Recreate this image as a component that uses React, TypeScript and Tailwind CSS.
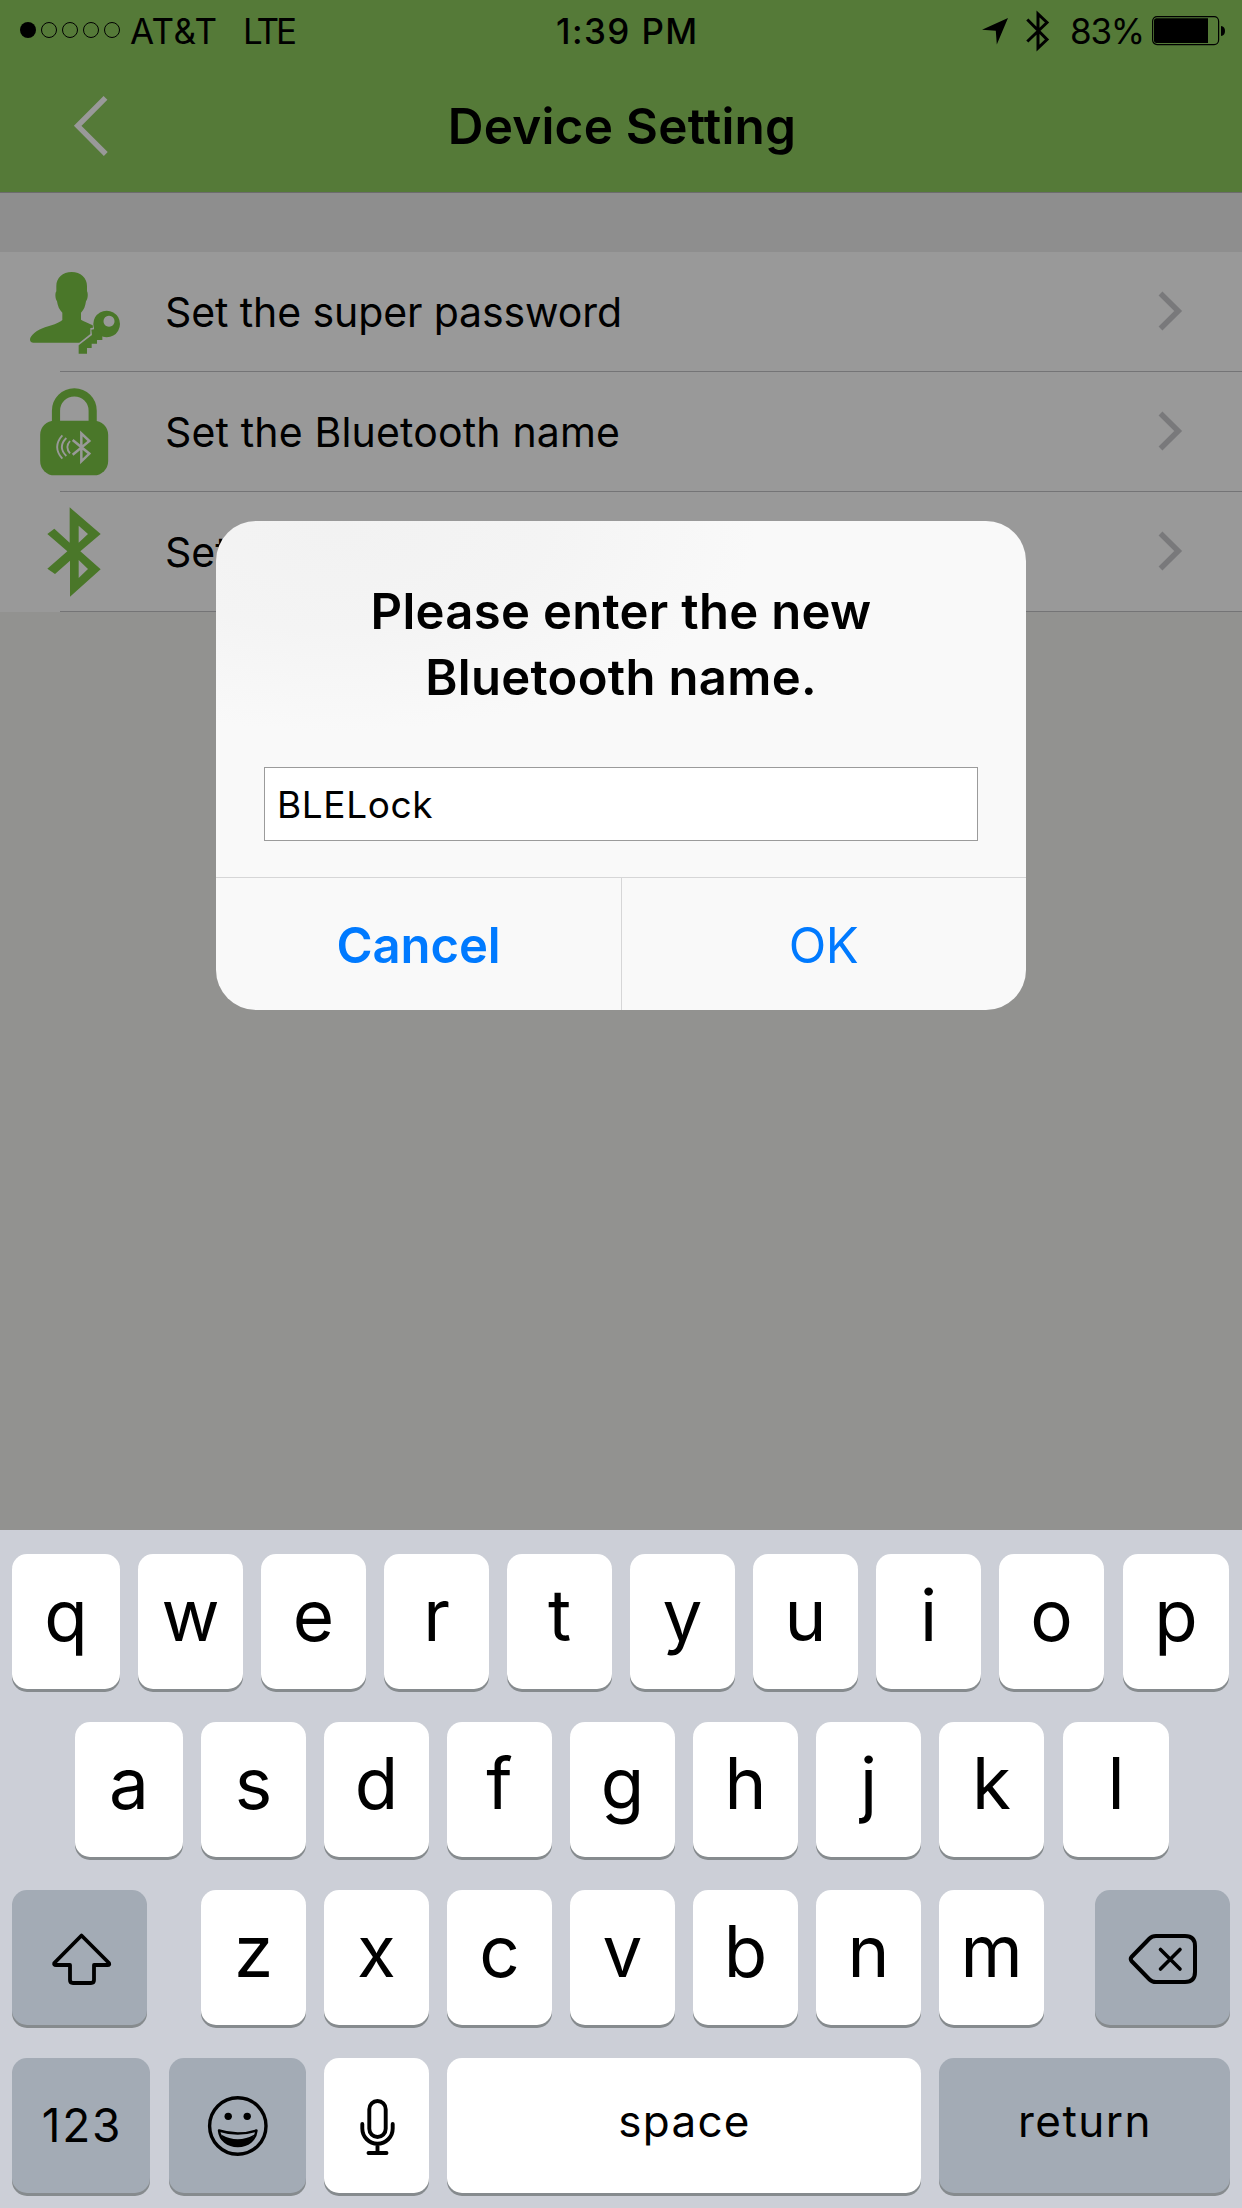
import type { ReactNode } from "react";

const GREEN = "#4a7729";

function StatusBar() {
  return (
    <div className="flex h-[62px] items-center pl-5 pr-4 text-[35px] leading-none">
      <div className="flex w-[110px] shrink-0 items-center gap-[5px] pb-[2px]">
        <span className="size-4 rounded-full bg-black" />
        <span className="size-4 rounded-full border border-black" />
        <span className="size-4 rounded-full border border-black" />
        <span className="size-4 rounded-full border border-black" />
        <span className="size-4 rounded-full border border-black" />
      </div>
      <span className="w-[113px] shrink-0 tracking-[0.45px]">AT&amp;T</span>
      <span className="w-[313px] shrink-0 tracking-[-3px]">LTE</span>
      <span className="whitespace-nowrap font-[550] tracking-[1.4px]">1:39 PM</span>
      <div className="ml-auto flex items-center">
        <svg width="27" height="28" viewBox="0 0 27 28" className="mr-[17px]">
          <path d="M26 1 L14.8 27.5 L13.8 13.8 L0 12.8 Z" fill="#000" />
        </svg>
        <svg width="24" height="42" viewBox="0 0 24 42" className="mr-5">
          <path d="M1.3 9.5 L21 29.5 L12 38 V4 L21 12.5 L1.3 31.5" fill="none" stroke="#000" strokeWidth="3" />
        </svg>
        <span className="w-[82px] tracking-[-1.2px]">83%</span>
        <svg width="74" height="30" viewBox="0 0 74 30">
          <rect x="0.6" y="0.6" width="66" height="28" rx="4.5" fill="none" stroke="#000" strokeWidth="1.2" />
          <path d="M4.5 2.2 H56 V27 H4.5 Q2 27 2 24.5 V4.7 Q2 2.2 4.5 2.2 Z" fill="#000" />
          <path d="M69 10 Q73 10.5 73 15 T69 20 Z" fill="#000" />
        </svg>
      </div>
    </div>
  );
}

function NavBar() {
  return (
    <div className="grid h-[130px] grid-cols-[200px_1fr_200px] items-center">
      <svg width="40" height="64" viewBox="70 95 40 64" className="ml-[70px]">
        <path d="M105.5 97.8 L77.7 125.8 L105.8 154" fill="none" stroke="#999" strokeWidth="5.4" />
      </svg>
      <h1 className="whitespace-nowrap pl-[2px] text-center text-[49.5px] font-[580] leading-none tracking-[0.2px]">
        Device Setting
      </h1>
    </div>
  );
}

function UserKeyIcon() {
  return (
    <svg width="110" height="119" viewBox="0 -24 330 357" fill={GREEN}>
      <path d="M155 36 C128 36 109 54 109 78 L109 94 C105 98 105 116 111 124 C113 138 118 150 127 158 L127 180 C115 190 95 196 75 202 C50 210 30 228 30 239 C30 245 35 248 40 248 L178 248 L211 222 L211 204 L219 203 L218 196 C205 189 190 184 183 179 L183 158 C192 150 196 138 198 124 C205 116 204 98 201 94 L201 78 C201 54 182 36 155 36 Z" />
      <path
        fillRule="evenodd"
        d="M260 152 a40 40 0 1 1 -0.1 0 Z M267 167 a16.5 16.5 0 1 0 0.1 0 Z"
      />
      <path d="M222 200 L222 208 L214 209 L216 225 L176 256 V281 H201 V264 H215 V251 H231 V240 H247 V229 L238 215 Z" />
    </svg>
  );
}

function LockIcon() {
  return (
    <svg width="110" height="119" viewBox="0 336 330 357">
      <path d="M108 490 V452 a55 55 0 0 1 110 0 V490" fill="none" stroke={GREEN} strokeWidth="24.5" />
      <rect x="60.5" y="482" width="204" height="164" rx="43" fill={GREEN} />
      <g fill="none" stroke="#999">
        <path d="M158 540 L208 581 L184 604 V520 L208 543 L158 584" strokeWidth="7.5" />
        <path d="M127 526 Q96 561 127 596 M139 534 Q112 561 139 588 M150 543 Q134 561 150 580" strokeWidth="5.5" />
      </g>
    </svg>
  );
}

function BluetoothIcon() {
  return (
    <svg width="110" height="119" viewBox="0 696 330 357">
      <path
        fill={GREEN}
        fillRule="evenodd"
        d="M149 742 L242 822 L181 874 L242 928 L150 1010 V902 L105 942 L82 926 L142 874 L82 822 L103 806 L149 848 Z M176 797 V848 L204 822 Z M176 900 V954 L204 927 Z"
      />
    </svg>
  );
}

function SettingRow({ icon, label, tracking = "" }: { icon: ReactNode; label: string; tracking?: string }) {
  return (
    <li className="relative flex h-[120px] items-center pb-px pl-5 pr-[58px]">
      {icon}
      <span className={`ml-[35px] whitespace-nowrap pt-[2px] text-[41px] leading-none ${tracking}`}>{label}</span>
      <svg width="28" height="42" viewBox="1156 290.5 28 42" className="ml-auto">
        <path d="M1160.5 293 L1178.2 310.5 L1160.5 328" fill="none" stroke="#79797b" strokeWidth="5.5" />
      </svg>
      <span className="absolute bottom-0 left-[60px] right-0 h-px bg-[#747476]" />
    </li>
  );
}

function Dialog() {
  return (
    <div className="absolute left-[216px] top-[521px] flex h-[489px] w-[810px] flex-col overflow-hidden rounded-[40px] bg-[#f9f9f9] bg-[radial-gradient(ellipse_420px_200px_at_120px_10px,#f2f2f2_0%,#f4f4f4_50%,#f9f9f9_100%)]">
      <h2 className="mt-[58px] text-center text-[49px] font-semibold leading-[66px] tracking-[0.3px]">
        Please enter the new
        <br />
        Bluetooth name.
      </h2>
      <div className="mx-12 mt-[56px] flex h-[74px] items-center border border-[#9b9b9b] bg-white pl-[12px] text-[37px] leading-none tracking-[0.6px]">
        BLELock
      </div>
      <div className="mt-auto grid h-[133px] grid-cols-[406px_404px] border-t border-[#d6d6d7] text-[49px] leading-none text-[#007aff]">
        <button className="border-r border-[#d6d6d7] pt-[2px] font-semibold tracking-[-0.1px]">Cancel</button>
        <button className="pr-px pt-[2px] tracking-[-0.5px]">OK</button>
      </div>
    </div>
  );
}

function Key({ className, children }: { className: string; children: ReactNode }) {
  return (
    <button className={`flex h-[135px] shrink-0 items-center justify-center rounded-[15px] leading-none shadow-[0_3px_0_#868b8e] ${className}`}>
      {children}
    </button>
  );
}

function LetterKey({ letter, width = "w-[105px]" }: { letter: string; width?: string }) {
  return <Key className={`bg-white pb-[12px] text-[71px] font-[370] ${width}`}>{letter}</Key>;
}

function Keyboard() {
  return (
    <div className="flex h-[678px] flex-col gap-[33px] bg-[#cccfd7] pl-3 pt-6">
      <div className="flex gap-[18px]">
        <LetterKey letter="q" width="w-[108px]" />
        {"wertyuio".split("").map((c) => (
          <LetterKey key={c} letter={c} />
        ))}
        <LetterKey letter="p" width="ml-px w-[106px]" />
      </div>
      <div className="flex gap-[18px] pl-[63px]">
        <LetterKey letter="a" width="w-[108px]" />
        {"sdfghjk".split("").map((c) => (
          <LetterKey key={c} letter={c} />
        ))}
        <LetterKey letter="l" width="ml-px w-[106px]" />
      </div>
      <div className="flex">
        <Key className="w-[135px] bg-[#a3abb5]">
          <svg width="135" height="135" viewBox="0 0 135 135" fill="none" stroke="#000" strokeWidth="3.8" strokeLinejoin="round">
            <path d="M69.5 45.5 L42.3 73 Q41.5 75 44 75 H58 V90 Q58 93 61 93 H79 Q82 93 82 90 V75 H95.5 Q98 75 97 73 Z" />
          </svg>
        </Key>
        <div className="ml-[54px] mr-[51px] flex gap-[18px]">
          {"zxcvbnm".split("").map((c) => (
            <LetterKey key={c} letter={c} />
          ))}
        </div>
        <Key className="w-[135px] bg-[#a3abb5]">
          <svg width="135" height="135" viewBox="0 0 135 135" fill="none" stroke="#000" strokeLinecap="round" strokeLinejoin="round">
            <path strokeWidth="4" d="M61 46 H90 Q100 46 100 56 V82 Q100 92 90 92 H61 Q57 92 54.5 89.5 L36.5 71 Q35 69 36.5 67 L54.5 48.5 Q57 46 61 46 Z" />
            <path strokeWidth="3.6" d="M65.5 59.5 L85 79 M85 59.5 L65.5 79" />
          </svg>
        </Key>
      </div>
      <div className="flex gap-[18px]">
        <Key className="w-[138px] bg-[#a3abb5] pb-px pl-[2px] text-[46px] tracking-[1.8px]">123</Key>
        <Key className="ml-px w-[137px] bg-[#a3abb5]">
          <svg width="137" height="135" viewBox="0 0 137 135">
            <circle cx="68.8" cy="68" r="28.2" fill="none" stroke="#000" strokeWidth="3.4" />
            <ellipse cx="59.2" cy="58.3" rx="3.7" ry="3.6" />
            <ellipse cx="78.2" cy="58.3" rx="3.7" ry="3.6" />
            <path d="M50 72.5 Q68.8 78.5 87.5 72.5 C86.5 82 79 88 68.8 88 S51 82 50 72.5 Z" fill="none" stroke="#000" strokeWidth="2.4" strokeLinejoin="round" />
            <path d="M52 76.5 Q68.8 86 85.5 76.5 C82 85 76.5 88 68.8 88 S55.5 85 52 76.5 Z" />
          </svg>
        </Key>
        <Key className="w-[105px] bg-white">
          <svg width="105" height="135" viewBox="0 0 105 135" fill="none" stroke="#000" strokeWidth="3.9" strokeLinecap="round">
            <rect x="45.3" y="43" width="16.4" height="36" rx="8.2" />
            <path d="M38.3 66 V70.5 a15.2 15.2 0 0 0 30.4 0 V66 M53.5 86 V95 M44.5 95 H62.5" />
          </svg>
        </Key>
        <Key className="w-[474px] bg-white pb-[9px] pl-px text-[44px] tracking-[1.3px]">space</Key>
        <Key className="w-[291px] bg-[#a3abb5] pb-[9px] pl-px text-[44px] tracking-[1.5px]">return</Key>
      </div>
    </div>
  );
}

export default function App() {
  return (
    <div className="relative flex h-[2208px] w-[1242px] flex-col overflow-hidden bg-[#929290] font-['Inter','Liberation_Sans',sans-serif] text-black">
      <header className="bg-[#557a38]">
        <StatusBar />
        <NavBar />
      </header>
      <div className="h-[60px] border-t border-[#6c6c6c] bg-[#8e8e8e]" />
      <ul className="bg-[#999]">
        <SettingRow icon={<UserKeyIcon />} label="Set the super password" tracking="tracking-[-0.1px]" />
        <SettingRow icon={<LockIcon />} label="Set the Bluetooth name" tracking="tracking-[0.16px]" />
        <SettingRow icon={<BluetoothIcon />} label="Set" />
      </ul>
      <div className="mt-auto">
        <Keyboard />
      </div>
      <Dialog />
    </div>
  );
}
